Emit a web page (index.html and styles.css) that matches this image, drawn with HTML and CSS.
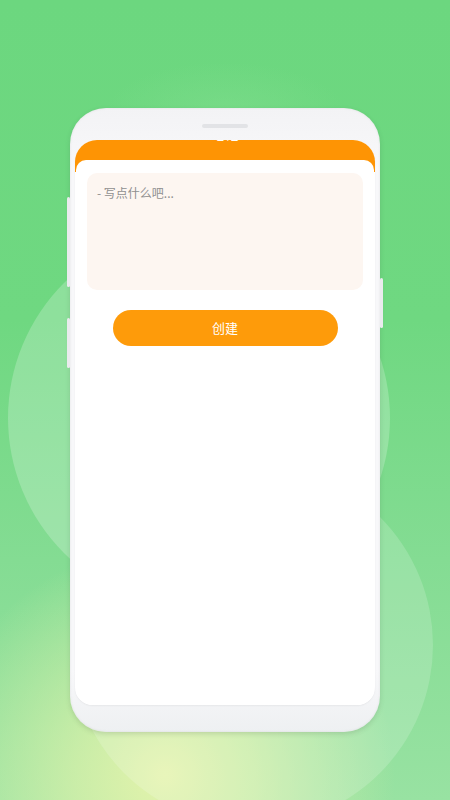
FILE: index.html
```html
<!DOCTYPE html>
<html lang="zh">
<head>
<meta charset="utf-8">
<link rel="stylesheet" href="styles.css">
</head>
<body>
<div class="stage">
  <div class="bubble bubble-left"></div>
  <div class="bubble bubble-right"></div>
  <div class="phone">
    <span class="key key-l1"></span>
    <span class="key key-l2"></span>
    <span class="key key-r1"></span>
    <div class="speaker"></div>
    <div class="screen">
      <div class="header"><span class="title">笔记</span></div>
      <div class="card">
        <div class="note">- 写点什么吧...</div>
        <div class="btn-row"><div class="btn">创建</div></div>
      </div>
    </div>
  </div>
</div>
</body>
</html>
```
FILE: styles.css
```css
* { box-sizing: border-box; }
html, body { margin: 0; padding: 0; }
body { font-family: "Noto Sans CJK SC", "Noto Sans", sans-serif; }

.stage {
  position: relative;
  width: 450px;
  height: 800px;
  overflow: hidden;
  padding-top: 108px;
  background:
    radial-gradient(ellipse 230px 230px at 165px 775px, rgba(228,243,172,1) 0%, rgba(228,243,172,0.65) 40%, rgba(228,243,172,0) 100%),
    radial-gradient(ellipse 120px 50px at 225px 112px, rgba(132,223,144,0.45), rgba(132,223,144,0)),
    linear-gradient(180deg, #6cd77f 0%, #6fd881 40%, #84dc93 70%, #98e2a2 100%);
}

.bubble {
  position: absolute;
  border-radius: 50%;
  background: rgba(255,255,255,0.22);
}
.bubble-left { left: 8px; top: 227px; width: 382px; height: 382px; }
.bubble-right { left: 71px; top: 464px; width: 362px; height: 362px; background: rgba(255,255,255,0.17); }

.phone {
  position: relative;
  width: 310px;
  height: 624px;
  margin: 0 auto 0 70px;
  padding: 32px 5px 27px;
  border-radius: 36px;
  background: linear-gradient(180deg, #f3f3f5 0%, #f8f8fa 10%, #f8f8fa 90%, #eef0f2 100%);
  box-shadow: 0 2px 5px rgba(60,90,60,0.18), inset 0 0 3px rgba(0,0,0,0.08);
}

.key {
  position: absolute;
  width: 3px;
  background: #eaebee;
  border-radius: 2px;
}
.key-l1 { left: -3px; top: 89px; height: 90px; }
.key-l2 { left: -3px; top: 210px; height: 50px; }
.key-r1 { right: -3px; top: 170px; height: 50px; }

.speaker {
  position: absolute;
  left: 132px;
  top: 16px;
  width: 46px;
  height: 4px;
  border-radius: 2px;
  background: #e2e3e6;
}

.screen {
  height: 565px;
  border-radius: 22px 22px 18px 18px;
  overflow: hidden;
  background: #ffffff;
  display: flex;
  flex-direction: column;
  box-shadow: 0 1px 2px rgba(0,0,0,0.05);
}

.header {
  height: 32px;
  flex: none;
  background: #fe9404;
  display: flex;
  justify-content: center;
}
.title {
  margin-top: -15px;
  font-size: 14px;
  line-height: 16px;
  color: #ffffff;
}

.card {
  flex: 1;
  margin: -12px 1px 0;
  background: #ffffff;
  border-radius: 10px 10px 0 0;
  padding: 13px 11px 0;
}

.note {
  height: 117px;
  border-radius: 10px;
  background: #fdf6f1;
  padding: 10px 10px;
  font-size: 12px;
  line-height: 20px;
  color: #8f8f8f;
}

.btn-row {
  display: flex;
  justify-content: center;
  padding-top: 20px;
}
.btn {
  width: 225px;
  height: 36px;
  border-radius: 18px;
  background: #fe9b0a;
  color: #ffffff;
  font-size: 13px;
  line-height: 36px;
  text-align: center;
}
```
